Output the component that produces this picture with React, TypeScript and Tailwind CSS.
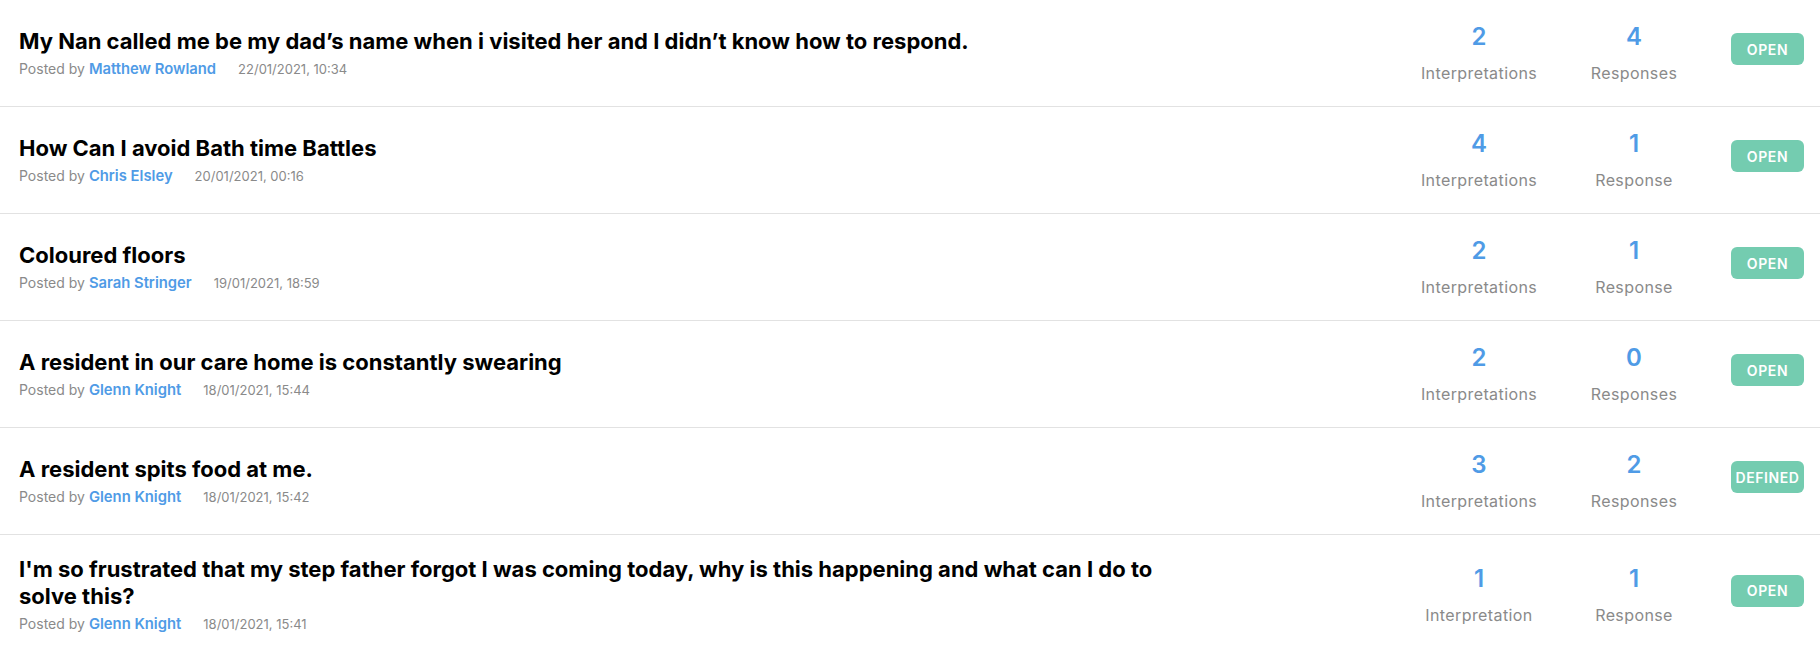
import React from 'react';

type Post = {
  title: string;
  author: string;
  date: string;
  interpretations: number;
  responses: number;
  status: 'OPEN' | 'DEFINED';
};

const POSTS: Post[] = [
  {
    title: 'My Nan called me be my dad’s name when i visited her and I didn’t know how to respond.',
    author: 'Matthew Rowland',
    date: '22/01/2021, 10:34',
    interpretations: 2,
    responses: 4,
    status: 'OPEN',
  },
  {
    title: 'How Can I avoid Bath time Battles',
    author: 'Chris Elsley',
    date: '20/01/2021, 00:16',
    interpretations: 4,
    responses: 1,
    status: 'OPEN',
  },
  {
    title: 'Coloured floors',
    author: 'Sarah Stringer',
    date: '19/01/2021, 18:59',
    interpretations: 2,
    responses: 1,
    status: 'OPEN',
  },
  {
    title: 'A resident in our care home is constantly swearing',
    author: 'Glenn Knight',
    date: '18/01/2021, 15:44',
    interpretations: 2,
    responses: 0,
    status: 'OPEN',
  },
  {
    title: 'A resident spits food at me.',
    author: 'Glenn Knight',
    date: '18/01/2021, 15:42',
    interpretations: 3,
    responses: 2,
    status: 'DEFINED',
  },
  {
    title:
      "I'm so frustrated that my step father forgot I was coming today, why is this happening and what can I do to solve this?",
    author: 'Glenn Knight',
    date: '18/01/2021, 15:41',
    interpretations: 1,
    responses: 1,
    status: 'OPEN',
  },
];

const Stat = ({ value, label, width }: { value: number; label: string; width: string }) => (
  <div className={`flex flex-col items-center shrink-0 ${width}`}>
    <span className="text-[24px] leading-[32px] font-semibold text-[#4f9be6]">{value}</span>
    <span className="mt-2 text-[16px] leading-[24px] tracking-[0.4px] text-[#8a8a8a]">{label}</span>
  </div>
);

const PostRow = ({ post }: { post: Post }) => {
  return (
    <div className="flex items-center border-b border-[#e2e2e2] pl-[19px] pr-4 py-[21px] last:border-b-0">
      <div className="flex-1 min-w-0">
        <h3 className="max-w-[1170px] text-[22px] leading-[27px] font-bold text-black">
          {post.title}
        </h3>
        <p className="mt-[5px] text-[14px] leading-[18px] text-[#8a8a8a]">
          Posted by{' '}
          <a href="#!" className="text-[14.8px] font-semibold text-[#4f9be6]">
            {post.author}
          </a>
          <span className="ml-[22px] text-[13px]">{post.date}</span>
        </p>
      </div>
      <Stat
        value={post.interpretations}
        label={post.interpretations === 1 ? 'Interpretation' : 'Interpretations'}
        width="w-[160px]"
      />
      <Stat
        value={post.responses}
        label={post.responses === 1 ? 'Response' : 'Responses'}
        width="w-[150px]"
      />
      <div className="ml-[22px] mb-2 flex h-[32px] w-[73px] shrink-0 items-center justify-center rounded-[6px] bg-[#74ccb0] text-[14px] font-semibold tracking-[0.6px] text-white">
        {post.status}
      </div>
    </div>
  );
};

const App = () => {
  return (
    <div className="w-full bg-white font-['Inter',sans-serif]">
      {POSTS.map((post, i) => (
        <PostRow key={i} post={post} />
      ))}
    </div>
  );
};

export default App;
